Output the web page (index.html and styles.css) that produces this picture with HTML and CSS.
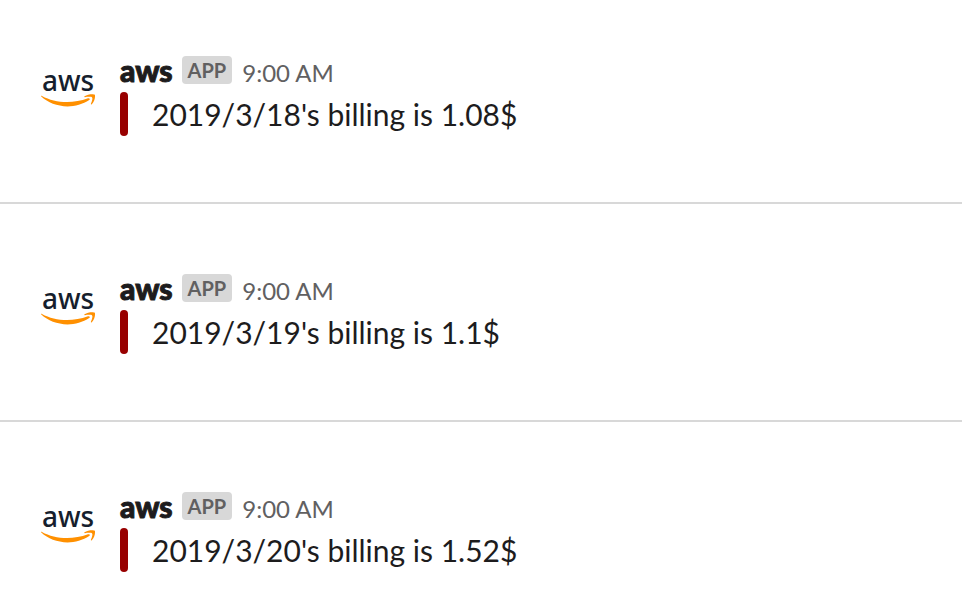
FILE: index.html
```html
<!DOCTYPE html>
<html lang="en">
<head>
    <meta charset="UTF-8">
    <meta name="viewport" content="width=device-width, initial-scale=1.0">
    <title>AWS Billing</title>
    <link rel="stylesheet" href="styles.css">
</head>
<body>
    <svg class="symbols" aria-hidden="true">
        <symbol id="smile" viewBox="0 0 56 14">
            <path d="M1.300 2.600C0.700 2 1.200 1.400 2 1.900C9 5.800 18 8 27 8C34 8 41 6.800 48 4.300C49.600 3.800 50.600 5.200 49.200 6.100C43 10.300 35 12.400 27.600 12.400C17 12.400 7.800 8.600 1.300 2.600Z"/>
            <path d="M44.500 2.300C47.500 0 54 -0.300 54.800 0.800C55.600 2.200 54.400 8 51.800 10.200C51.200 10.700 50.700 10.400 50.900 9.800C51.700 8 53 4.400 52.100 3.400C51.200 2.500 47 2.900 45 3.200C44.300 3.300 44.100 2.600 44.500 2.300Z"/>
        </symbol>
    </svg>
    <main class="messages">
        <article class="message">
            <div class="avatar">
                <span class="avatar-text">aws</span>
                <svg class="avatar-smile"><use href="#smile"/></svg>
            </div>
            <div class="content">
                <header class="meta">
                    <span class="sender">aws</span>
                    <span class="badge">APP</span>
                    <time class="time">9:00 AM</time>
                </header>
                <p class="attachment">2019/3/18's billing is 1.08$</p>
            </div>
        </article>
        <article class="message">
            <div class="avatar">
                <span class="avatar-text">aws</span>
                <svg class="avatar-smile"><use href="#smile"/></svg>
            </div>
            <div class="content">
                <header class="meta">
                    <span class="sender">aws</span>
                    <span class="badge">APP</span>
                    <time class="time">9:00 AM</time>
                </header>
                <p class="attachment">2019/3/19's billing is 1.1$</p>
            </div>
        </article>
        <article class="message">
            <div class="avatar">
                <span class="avatar-text">aws</span>
                <svg class="avatar-smile"><use href="#smile"/></svg>
            </div>
            <div class="content">
                <header class="meta">
                    <span class="sender">aws</span>
                    <span class="badge">APP</span>
                    <time class="time">9:00 AM</time>
                </header>
                <p class="attachment">2019/3/20's billing is 1.52$</p>
            </div>
        </article>
    </main>
</body>
</html>
```
FILE: styles.css
```css
/* General Styles */
body {
    margin: 0;
    background-color: #fff;
    color: #1d1c1d;
    font-family: Lato, sans-serif;
}

.symbols {
    display: none;
}

/* Messages */
.message {
    display: flex;
    gap: 24px;
    padding: 56px 40px 36px;
}

.message + .message {
    border-top: 2px solid #d8d8d8;
    padding-top: 70px;
}

.message:not(:last-child) {
    padding-bottom: 66px;
}

/* Avatar */
.avatar {
    flex: none;
    width: 56px;
    padding-top: 10px;
}

.avatar-text {
    display: block;
    font-family: "Noto Sans", "Open Sans", sans-serif;
    font-size: 28px;
    font-weight: 500;
    line-height: 28px;
    text-align: center;
    color: #161e2d;
}

.avatar-smile {
    display: block;
    width: 56px;
    height: 14px;
    fill: #ff9000;
}

/* Content */
.meta {
    display: flex;
    align-items: flex-start;
    height: 36px;
}

.sender {
    font-size: 30px;
    font-weight: 900;
    line-height: 28px;
    -webkit-text-stroke: 1px #1d1c1d;
}

.badge {
    margin: 0 10px 0 9px;
    padding: 0 6px;
    border-radius: 4px;
    background-color: #d8d8d8;
    color: #616061;
    font-size: 20px;
    font-weight: 700;
    line-height: 28px;
}

.time {
    color: #616061;
    font-size: 24px;
    line-height: 34px;
}

.attachment {
    position: relative;
    margin: 0;
    padding-left: 32px;
    font-size: 30px;
    line-height: 44px;
}

.attachment::before {
    content: "";
    position: absolute;
    top: 0;
    bottom: 0;
    left: 0;
    width: 8px;
    border-radius: 4px;
    background-color: #980000;
}
```
